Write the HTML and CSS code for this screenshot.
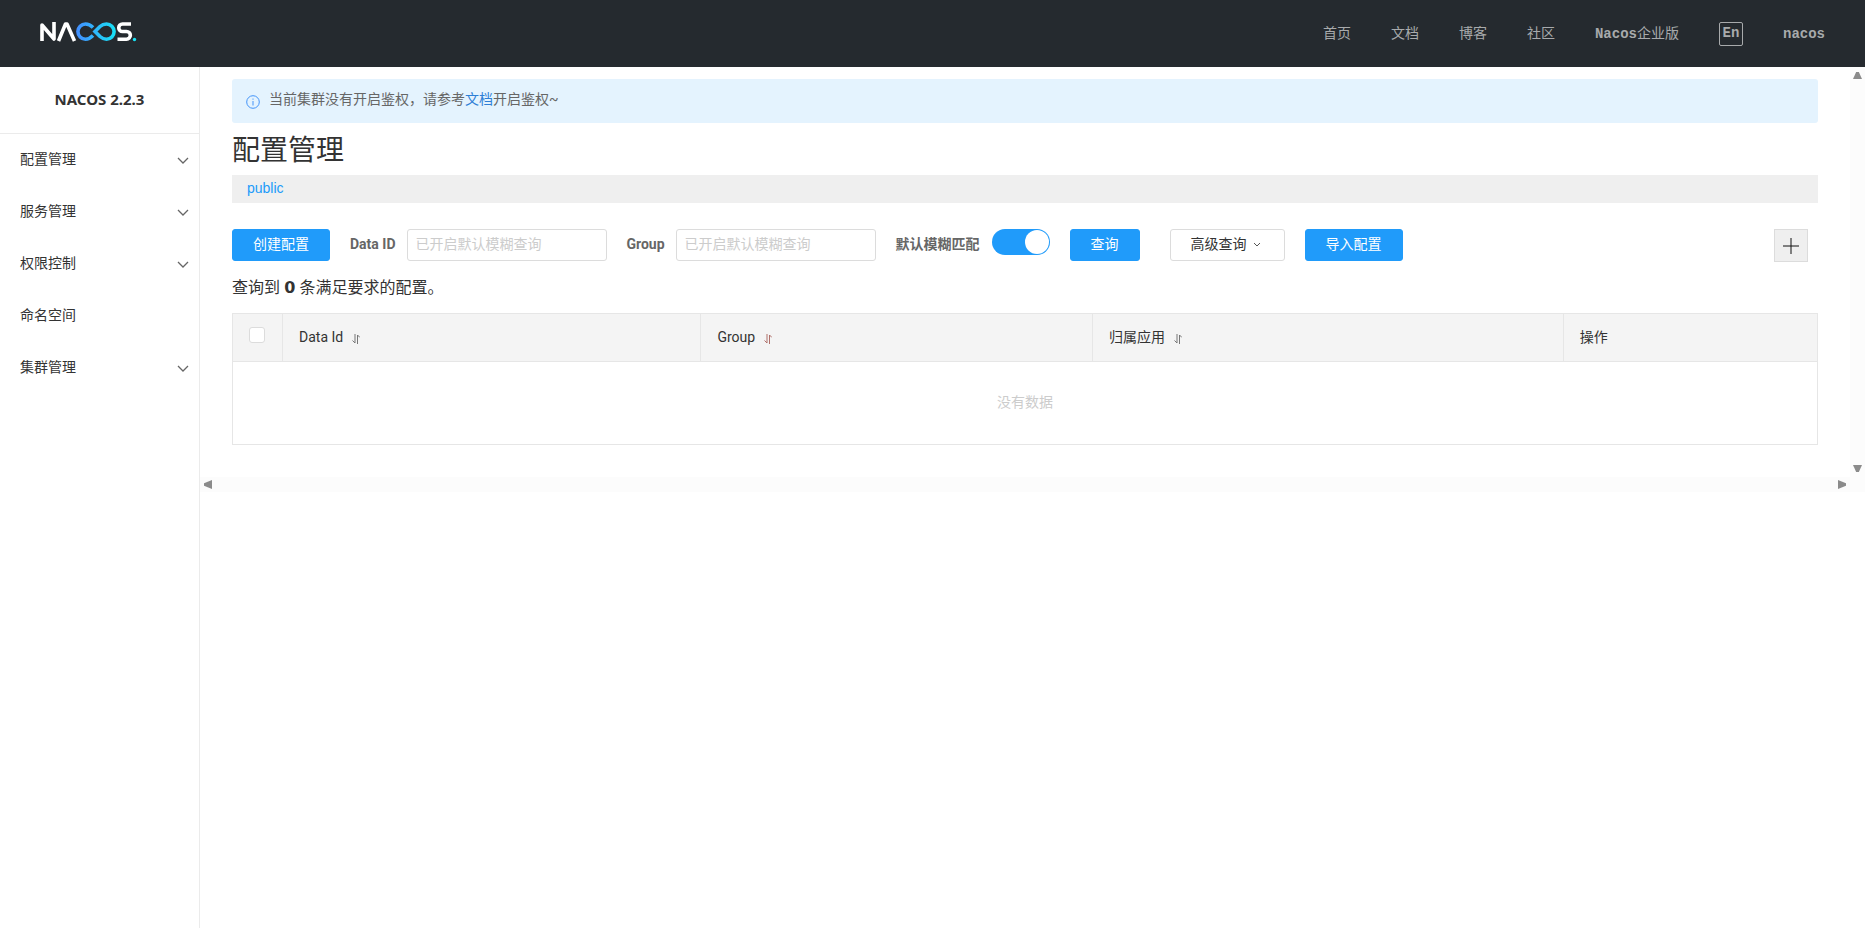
FILE: index.html
```html
<!DOCTYPE html>
<html lang="zh-CN">
<head>
<meta charset="utf-8">
<title>Nacos</title>
<link rel="stylesheet" href="styles.css">
</head>
<body>
<header class="header">
  <a class="logo" href="#" aria-label="Nacos">
    <svg width="98" height="20" viewBox="0 0 98 20" fill="none">
      <defs>
        <linearGradient id="loop" x1="36" y1="0" x2="76" y2="0" gradientUnits="userSpaceOnUse">
          <stop offset="0" stop-color="#448dff"/>
          <stop offset="1" stop-color="#17e2f5"/>
        </linearGradient>
      </defs>
      <g stroke="#fff" stroke-width="3.600" stroke-linejoin="round">
        <path d="M2 19V3L14 17V0"/>
        <path d="M18.500 19L25.500 2H27L34.500 19"/>
        <path d="M91 2H82.500A3.700 3.700 0 0 0 82.500 9.500H86.500A3.700 3.700 0 0 1 86.500 17.200H77.500"/>
      </g>
      <path d="M53 5.500C50.500 3 48.500 2 45.500 2A7.600 7.600 0 0 0 45.500 17.200C48.500 17.200 50.500 16 53 13.500M55 9.500L60 4.500C62 2.700 64 2 66.500 2A7.600 7.600 0 0 1 66.500 17.200C64 17.200 62 16.300 60 14.500Z" stroke="url(#loop)" stroke-width="3.600"/>
      <circle cx="94.500" cy="17.500" r="1.700" fill="#17e2f5"/>
    </svg>
  </a>
  <nav class="nav">
    <a href="#">首页</a>
    <a href="#">文档</a>
    <a href="#">博客</a>
    <a href="#">社区</a>
    <a href="#"><b>Nacos</b>企业版</a>
    <button class="lang" type="button"><b>En</b></button>
    <a href="#"><b>nacos</b></a>
  </nav>
</header>
<div class="layout">
  <aside class="sidebar">
    <h1 class="product">NACOS 2.2.3</h1>
    <ul class="menu">
      <li><a href="#">配置管理<svg class="chevron" viewBox="0 0 12 8"><path d="M1 1l5 5 5-5"/></svg></a></li>
      <li><a href="#">服务管理<svg class="chevron" viewBox="0 0 12 8"><path d="M1 1l5 5 5-5"/></svg></a></li>
      <li><a href="#">权限控制<svg class="chevron" viewBox="0 0 12 8"><path d="M1 1l5 5 5-5"/></svg></a></li>
      <li><a href="#">命名空间</a></li>
      <li><a href="#">集群管理<svg class="chevron" viewBox="0 0 12 8"><path d="M1 1l5 5 5-5"/></svg></a></li>
    </ul>
  </aside>
  <div class="viewport">
    <main class="main">
      <div class="notice">
        <svg class="info" viewBox="0 0 14 14"><circle cx="7" cy="7" r="6.300"/><path d="M7 6v4.500M7 3.500v1.200"/></svg>
        <p>当前集群没有开启鉴权，请参考<a href="#">文档</a>开启鉴权~</p>
      </div>
      <h2 class="title">配置管理</h2>
      <div class="namespace"><a href="#">public</a></div>
      <form class="filters">
        <button class="btn primary" type="button">创建配置</button>
        <div class="field"><label for="dataId">Data ID</label><input class="text" id="dataId" type="text" placeholder="已开启默认模糊查询"></div>
        <div class="field"><label for="group">Group</label><input class="text" id="group" type="text" placeholder="已开启默认模糊查询"></div>
        <div class="field toggle"><label for="fuzzy">默认模糊匹配</label><input class="switch" id="fuzzy" type="checkbox" role="switch" checked></div>
        <button class="btn primary" type="button">查询</button>
        <button class="btn advanced" type="button">高级查询<svg viewBox="0 0 8 6"><path d="M1 1l3 3 3-3"/></svg></button>
        <button class="btn primary" type="button">导入配置</button>
        <button class="add" type="button" aria-label="新建"><svg viewBox="0 0 16 16"><path d="M8 0v16M0 8h16"/></svg></button>
      </form>
      <p class="count">查询到 <strong>0</strong> 条满足要求的配置。</p>
      <table class="table">
        <colgroup><col class="c-check"><col class="c-id"><col class="c-group"><col class="c-app"><col class="c-op"></colgroup>
        <thead>
          <tr>
            <th class="check"><input type="checkbox" aria-label="全选"></th>
            <th>Data Id<svg class="sort" viewBox="0 0 8 10"><path d="M3 0v9L.5 6.500M5.500 10V1L8 3.500"/></svg></th>
            <th>Group<svg class="sort warm" viewBox="0 0 8 10"><path d="M3 0v9L.5 6.500M5.500 10V1L8 3.500"/></svg></th>
            <th>归属应用<svg class="sort" viewBox="0 0 8 10"><path d="M3 0v9L.5 6.500M5.500 10V1L8 3.500"/></svg></th>
            <th>操作</th>
          </tr>
        </thead>
        <tbody><tr><td class="empty" colspan="5">没有数据</td></tr></tbody>
      </table>
    </main>
    <div class="bar-y"><i class="arrow up"></i><i class="arrow down"></i></div>
    <div class="bar-x"><i class="arrow left"></i><i class="arrow right"></i></div>
  </div>
</div>
</body>
</html>
```
FILE: styles.css
```css
* { box-sizing: border-box; }
body {
  margin: 0;
  min-height: 100vh;
  display: flex;
  flex-direction: column;
  background: #fff;
  color: #333;
  font: 14px/20px Roboto, "Noto Sans CJK SC", sans-serif;
}
a { color: inherit; text-decoration: none; }
button, input { font: inherit; color: inherit; }
button { cursor: pointer; }
p, h1, h2, ul { margin: 0; padding: 0; }
svg { fill: none; flex: none; }

.header {
  display: flex;
  align-items: center;
  justify-content: space-between;
  height: 67px;
  padding: 0 40px;
  background: #252a2f;
}
.logo { display: flex; padding-bottom: 4px; }
.nav {
  display: flex;
  align-items: center;
  gap: 40px;
  color: #a8aaac;
  font-family: "Liberation Mono", "Noto Sans CJK SC", monospace;
}
.lang {
  width: 24px;
  height: 24px;
  padding: 0 0 2px;
  border: 1px solid #a8aaac;
  border-radius: 2px;
  background: none;
  line-height: 20px;
}

.layout { display: flex; flex: 1; }
.sidebar { width: 200px; border-right: 1px solid #ebebeb; flex: none; }
.product {
  height: 67px;
  border-bottom: 1px solid #ebebeb;
  font: bold 15px/64px "Noto Sans", sans-serif;
  text-align: center;
}
.menu { list-style: none; }
.menu a {
  display: flex;
  align-items: center;
  justify-content: space-between;
  height: 52px;
  padding: 0 10px 2px 20px;
}
.chevron { width: 12px; height: 8px; margin-top: 4px; stroke: #666; stroke-width: 1.3; }

.viewport {
  flex: 1;
  min-width: 0;
  align-self: flex-start;
  display: grid;
  grid-template-columns: minmax(0, 1fr) 15px;
  grid-template-rows: auto 15px;
}
.main { padding: 12px 32px 32px; }
.notice {
  display: flex;
  gap: 9px;
  padding: 10px 14px;
  height: 44px;
  border-radius: 3px;
  background: #e4f3fe;
  color: #666;
}
.notice a { color: #2e7fd6; }
.info { width: 14px; height: 14px; margin-top: 6px; stroke: #4494f9; }
.title { margin: 8px 0 4px; font-size: 28px; line-height: 40px; font-weight: 400; }
.namespace {
  height: 28px;
  padding: 3px 15px;
  background: #efefef;
  color: #209bfa;
  font-family: "Liberation Sans", sans-serif;
}

.filters { display: flex; gap: 20px; margin-top: 26px; height: 33px; }
.btn {
  height: 32px;
  padding: 0 20px 2px;
  border: 1px solid #dcdcdc;
  border-radius: 3px;
  background: #fff;
  line-height: 28px;
}
.primary { border-color: #209bfa; background: #209bfa; color: #fff; }
.advanced { display: flex; align-items: center; gap: 6px; margin-left: 10px; padding-right: 23px; }
.advanced svg { width: 8px; height: 6px; margin-top: 2px; stroke: #555; }
.field { display: flex; gap: 11px; }
.toggle { gap: 12px; }
.field label { color: #666; font-weight: 700; line-height: 30px; }
.text {
  width: 200px;
  height: 32px;
  padding: 0 8px 2px;
  border: 1px solid #dcdcdc;
  border-radius: 3px;
}
.text::placeholder { color: #ccc; }
.switch {
  appearance: none;
  display: flex;
  justify-content: flex-end;
  width: 58px;
  height: 26px;
  margin: 0;
  padding: 1px;
  border-radius: 13px;
  background: #209bfa;
}
.switch::before { content: ""; width: 24px; height: 24px; border-radius: 50%; background: #fff; }
.add {
  display: flex;
  align-items: center;
  justify-content: center;
  width: 34px;
  height: 33px;
  margin: 0 10px 0 auto;
  padding: 0;
  border: 1px solid #dcdcdc;
  background: #efefef;
}
.add svg { width: 16px; height: 16px; stroke: #111; }
.count { margin: 13px 0; font-size: 16px; line-height: 24px; font-family: "Noto Sans", "Noto Sans CJK SC", sans-serif; }
.count strong { font-family: "DejaVu Sans", sans-serif; }

.table {
  width: 100%;
  table-layout: fixed;
  border-collapse: collapse;
  border: 1px solid #e6e6e6;
}
.c-check { width: 50px; }
.c-id { width: 26.4%; }
.c-group { width: 24.7%; }
.c-app { width: 29.7%; }
.table th {
  height: 48px;
  padding: 0 16px 2px;
  border: 1px solid #e6e6e6;
  background: #f4f4f4;
  font-weight: 400;
  text-align: left;
}
.table .check input {
  appearance: none;
  display: block;
  width: 16px;
  height: 16px;
  margin: 0 0 4px;
  border: 1px solid #dcdcdc;
  border-radius: 3px;
  background: #fff;
}
.sort { width: 8px; height: 10px; margin-left: 9px; vertical-align: -2px; stroke: #777; }
.sort.warm { stroke: #b0706a; }
.table .empty { height: 83px; padding: 0 0 2px; color: #ccc; text-align: center; }

.bar-y, .bar-x { display: flex; justify-content: space-between; align-items: center; background: #fcfcfc; }
.bar-y { flex-direction: column; padding: 5px 0; }
.bar-x { grid-column: 1 / -1; grid-row: 2; padding: 0 19px 0 4px; }
.arrow { width: 9px; height: 7px; background: #8b8b8b; }
.up { clip-path: polygon(35% 0, 65% 0, 100% 100%, 0 100%); }
.down { clip-path: polygon(0 0, 100% 0, 65% 100%, 35% 100%); }
.left, .right { width: 8px; height: 9px; }
.left { clip-path: polygon(100% 0, 100% 100%, 0 65%, 0 35%); }
.right { clip-path: polygon(0 0, 100% 35%, 100% 65%, 0 100%); }
```
